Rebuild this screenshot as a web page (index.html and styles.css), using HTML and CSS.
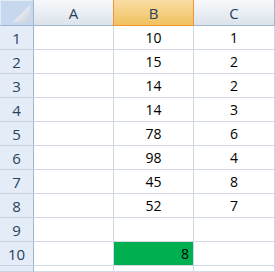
FILE: index.html
```html
<!DOCTYPE html>
<html lang="en">

<head>
    <meta charset="UTF-8">
    <title>Sheet</title>
    <link rel="stylesheet" href="styles.css">
</head>

<body>
    <div class="sheet">
        <div class="corner">
            <svg width="32" height="25" viewBox="0 0 32 25">
                <defs>
                    <linearGradient id="tri" x1="0" y1="0" x2="1" y2="1">
                        <stop offset="0" stop-color="#ffffff" />
                        <stop offset="1" stop-color="#c9d1dc" />
                    </linearGradient>
                </defs>
                <polygon points="30,5 30,22 13,22" fill="url(#tri)" />
            </svg>
        </div>
        <div class="col-head">A</div>
        <div class="col-head active">B</div>
        <div class="col-head">C</div>

        <div class="row-head">1</div><div class="cell"></div><div class="cell">10</div><div class="cell">1</div>
        <div class="row-head">2</div><div class="cell"></div><div class="cell">15</div><div class="cell">2</div>
        <div class="row-head">3</div><div class="cell"></div><div class="cell">14</div><div class="cell">2</div>
        <div class="row-head">4</div><div class="cell"></div><div class="cell">14</div><div class="cell">3</div>
        <div class="row-head">5</div><div class="cell"></div><div class="cell">78</div><div class="cell">6</div>
        <div class="row-head">6</div><div class="cell"></div><div class="cell">98</div><div class="cell">4</div>
        <div class="row-head">7</div><div class="cell"></div><div class="cell">45</div><div class="cell">8</div>
        <div class="row-head">8</div><div class="cell"></div><div class="cell">52</div><div class="cell">7</div>
        <div class="row-head">9</div><div class="cell"></div><div class="cell"></div><div class="cell"></div>
        <div class="row-head">10</div><div class="cell"></div><div class="cell num green">8</div><div class="cell"></div>
        <div class="row-head"></div><div class="cell"></div><div class="cell"></div><div class="cell"></div>
    </div>
</body>

</html>
```

FILE: styles.css
```css
body {
    margin: 0;
    padding: 0;
    background-color: #fff;
    font-family: 'Open Sans', 'Liberation Sans', sans-serif;
    font-size: 14px;
    color: #000;
    overflow: hidden;
}

.sheet {
    display: grid;
    grid-template-columns: 34px 80px 80px 81px;
    grid-template-rows: 26px repeat(10, 24px) 6px;
}

.corner {
    background-color: #c7d7ee;
    border-right: 1px solid #9eb6ce;
    border-bottom: 1px solid #9eb6ce;
    box-shadow: inset 1px 1px 0 #e3ebf6;
}

.corner svg {
    display: block;
}

.col-head {
    display: flex;
    align-items: center;
    justify-content: center;
    background: linear-gradient(#f8f9fb, #dce3ec);
    border-right: 1px solid #9eb6ce;
    border-bottom: 1px solid #9eb6ce;
    color: #27415f;
    font-size: 15px;
}

.col-head.active {
    background: linear-gradient(#f9dca5, #f1c15f);
    border-right-color: #f29436;
    border-bottom-color: #f29436;
    box-shadow: -1px 0 0 #f29436;
}

.row-head {
    display: flex;
    align-items: center;
    justify-content: center;
    background-color: #e4ecf7;
    border-right: 1px solid #9eb6ce;
    border-bottom: 1px solid #c5d3e3;
    color: #27415f;
    font-size: 15px;
}

.cell {
    display: flex;
    align-items: center;
    justify-content: center;
    border-right: 1px solid #d0d7e5;
    border-bottom: 1px solid #d0d7e5;
}

.cell.num {
    justify-content: flex-end;
    padding-right: 4px;
}

.green {
    background-color: #00b050;
}
```
